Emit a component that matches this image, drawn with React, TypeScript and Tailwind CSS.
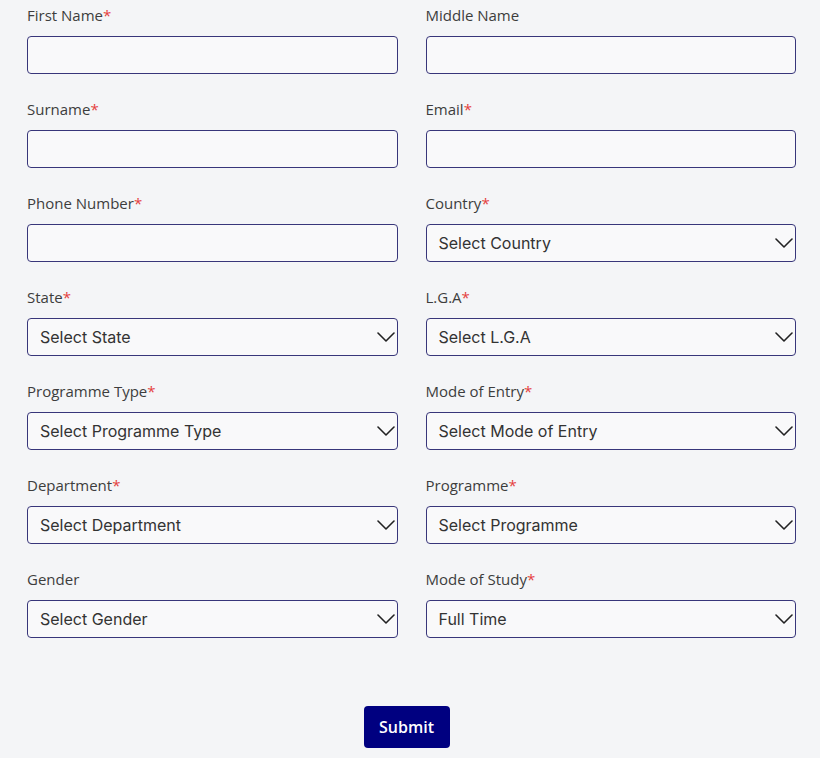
import React from 'react';

type Field = {
    label: string;
    required?: boolean;
    select?: string;
};

const fields: Field[] = [
    { label: 'First Name', required: true },
    { label: 'Middle Name' },
    { label: 'Surname', required: true },
    { label: 'Email', required: true },
    { label: 'Phone Number', required: true },
    { label: 'Country', required: true, select: 'Select Country' },
    { label: 'State', required: true, select: 'Select State' },
    { label: 'L.G.A', required: true, select: 'Select L.G.A' },
    { label: 'Programme Type', required: true, select: 'Select Programme Type' },
    { label: 'Mode of Entry', required: true, select: 'Select Mode of Entry' },
    { label: 'Department', required: true, select: 'Select Department' },
    { label: 'Programme', required: true, select: 'Select Programme' },
    { label: 'Gender', select: 'Select Gender' },
    { label: 'Mode of Study', required: true, select: 'Full Time' },
];

const Chevron = () => (
    <svg width="18" height="10" viewBox="0 0 18 10" fill="none" className="absolute right-[2px] top-[13px] pointer-events-none">
        <path d="M1 1 L9 9 L17 1" stroke="#222" strokeWidth="1.6" strokeLinecap="round" strokeLinejoin="round" />
    </svg>
);

const FormField: React.FC<{ field: Field }> = ({ field }) => (
    <div className="flex flex-col">
        <label className="h-[22px] leading-[22px] mb-[10px] text-[15px] text-[#3d3d3d] font-['Open_Sans',sans-serif]">
            {field.label}
            {field.required && <span className="text-[#e53e3e]">*</span>}
        </label>
        {field.select ? (
            <div className="relative h-[38px] rounded-[4px] border border-[#38367a] bg-[#f9f9fa] flex items-center pl-3">
                <span className="text-[16px] text-[#333] font-['Inter',sans-serif]">{field.select}</span>
                <Chevron />
            </div>
        ) : (
            <input
                type="text"
                className="h-[38px] w-full rounded-[4px] border border-[#38367a] bg-[#f9f9fa] px-3 outline-none"
            />
        )}
    </div>
);

export default function App() {
    return (
        <div className="min-h-[758px] w-full bg-[#f4f5f7] pl-[27px] pr-[24px] pt-[4px] pb-[10px]">
            <div className="grid grid-cols-2 gap-x-[28px] gap-y-[24px]">
                {fields.map((f) => (
                    <FormField key={f.label} field={f} />
                ))}
            </div>
            <div className="flex justify-center mt-[68px]">
                <button className="mr-[10px] h-[42px] w-[86px] rounded-[4px] bg-[#000080] text-white text-[16px] font-semibold font-['Open_Sans',sans-serif]">
                    Submit
                </button>
            </div>
        </div>
    );
}
